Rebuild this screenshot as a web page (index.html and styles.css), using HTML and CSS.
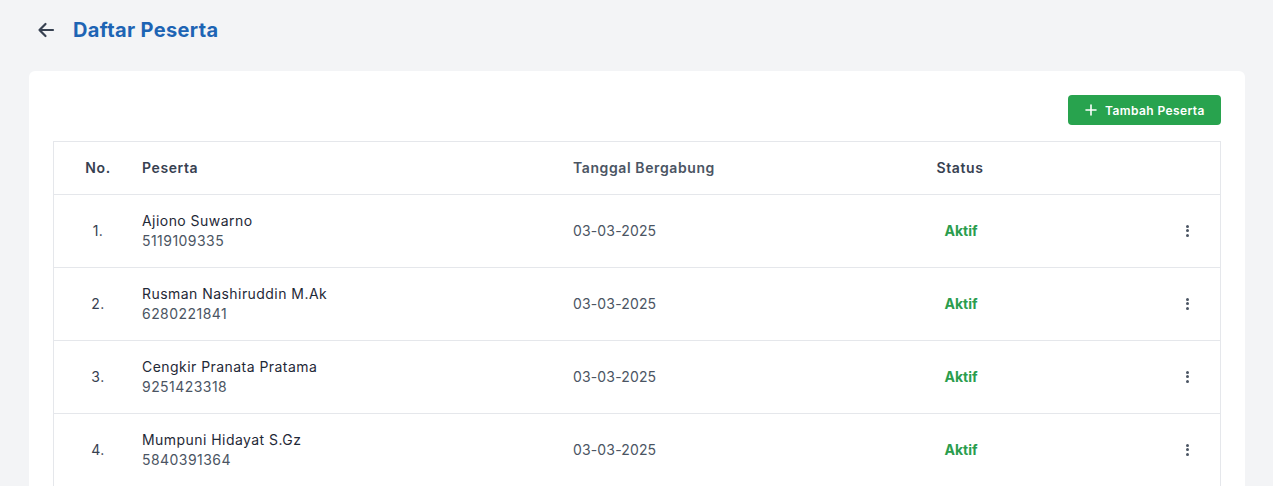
FILE: index.html
```html
<!DOCTYPE html>
<html lang="id">
<head>
<meta charset="utf-8">
<title>Daftar Peserta</title>
<link rel="stylesheet" href="styles.css">
</head>
<body>
<div class="page">
  <header class="top">
    <button class="back" aria-label="Kembali">
      <svg width="20" height="20" viewBox="0 0 20 20" fill="none" stroke="#374151" stroke-width="2.2" stroke-linecap="round" stroke-linejoin="round"><path d="M17 10H3.5M9.5 4l-6 6 6 6"/></svg>
    </button>
    <h1 class="title">Daftar Peserta</h1>
  </header>
  <section class="card">
    <div class="toolbar">
      <button class="btn-add">
        <svg width="12" height="12" viewBox="0 0 12 12" fill="none" stroke="#fff" stroke-width="1.6" stroke-linecap="round"><path d="M6 1v10M1 6h10"/></svg>
        <span>Tambah Peserta</span>
      </button>
    </div>
    <div class="table">
      <div class="row head">
        <div class="c-no">No.</div>
        <div class="c-name">Peserta</div>
        <div class="c-date">Tanggal Bergabung</div>
        <div class="c-status">Status</div>
        <div class="c-act"></div>
      </div>
      <div class="row">
        <div class="c-no">1.</div>
        <div class="c-name"><div class="nm">Ajiono Suwarno</div><div class="id">5119109335</div></div>
        <div class="c-date">03-03-2025</div>
        <div class="c-status"><span class="aktif">Aktif</span></div>
        <div class="c-act"><span class="kebab"><i></i><i></i><i></i></span></div>
      </div>
      <div class="row">
        <div class="c-no">2.</div>
        <div class="c-name"><div class="nm">Rusman Nashiruddin M.Ak</div><div class="id">6280221841</div></div>
        <div class="c-date">03-03-2025</div>
        <div class="c-status"><span class="aktif">Aktif</span></div>
        <div class="c-act"><span class="kebab"><i></i><i></i><i></i></span></div>
      </div>
      <div class="row">
        <div class="c-no">3.</div>
        <div class="c-name"><div class="nm">Cengkir Pranata Pratama</div><div class="id">9251423318</div></div>
        <div class="c-date">03-03-2025</div>
        <div class="c-status"><span class="aktif">Aktif</span></div>
        <div class="c-act"><span class="kebab"><i></i><i></i><i></i></span></div>
      </div>
      <div class="row">
        <div class="c-no">4.</div>
        <div class="c-name"><div class="nm">Mumpuni Hidayat S.Gz</div><div class="id">5840391364</div></div>
        <div class="c-date">03-03-2025</div>
        <div class="c-status"><span class="aktif">Aktif</span></div>
        <div class="c-act"><span class="kebab"><i></i><i></i><i></i></span></div>
      </div>
    </div>
  </section>
</div>
</body>
</html>
```
FILE: styles.css
```css
* { box-sizing: border-box; }
html, body { margin: 0; padding: 0; }
body {
  background: #f3f4f6;
  font-family: Inter, "Noto Sans", sans-serif;
  color: #374151;
  height: 486px;
  overflow: hidden;
}
.page { padding: 12px 28px 0 29px; }
.top {
  display: flex;
  align-items: center;
  height: 36px;
  margin-bottom: 23px;
}
.back {
  background: none;
  border: 0;
  padding: 0;
  margin-left: 7px;
  width: 20px;
  height: 20px;
  display: flex;
  align-items: center;
  justify-content: center;
  cursor: pointer;
}
.title {
  margin: 0 0 0 17px;
  font-size: 20px;
  font-weight: 700;
  color: #1d64b4;
  letter-spacing: 0.35px;
}
.card {
  background: #fff;
  border-radius: 6px;
  padding: 24px 24px 0;
  height: 430px;
}
.toolbar {
  display: flex;
  justify-content: flex-end;
  margin-bottom: 16px;
}
.btn-add {
  display: flex;
  align-items: center;
  gap: 8px;
  height: 30px;
  width: 153px;
  padding: 0 0 0 17px;
  background: #28a34e;
  color: #fff;
  border: 0;
  border-radius: 4px;
  font-family: inherit;
  font-size: 12px;
  font-weight: 600;
  letter-spacing: 0.4px;
}
.table {
  border: 1px solid #e5e7eb;
  border-bottom: 0;
}
.row {
  display: grid;
  grid-template-columns: 88px 431px 330px 114px 1fr;
  align-items: center;
  height: 73px;
  border-top: 1px solid #e5e7eb;
  font-size: 14px;
  letter-spacing: 0.45px;
}
.row:first-child { border-top: 0; }
.row.head {
  height: 52px;
  font-weight: 600;
  color: #374151;
  letter-spacing: 0.6px;
}
.row > div { padding-bottom: 1px; }
.c-no { text-align: center; }
.c-date { color: #4b5563; }
.row:not(.head) .c-date { letter-spacing: 0.15px; }
.c-status { text-align: center; }
.nm { line-height: 20px; color: #1f2937; }
.id { line-height: 20px; color: #4b5563; }
.aktif { color: #2a9d4d; font-weight: 700; letter-spacing: 0; padding-left: 2px; }
.c-act { display: flex; justify-content: flex-end; padding-right: 31px; }
.kebab {
  display: flex;
  flex-direction: column;
  gap: 1.5px;
}
.kebab i {
  display: block;
  width: 3px;
  height: 3px;
  border-radius: 50%;
  background: #4b5563;
}
```
